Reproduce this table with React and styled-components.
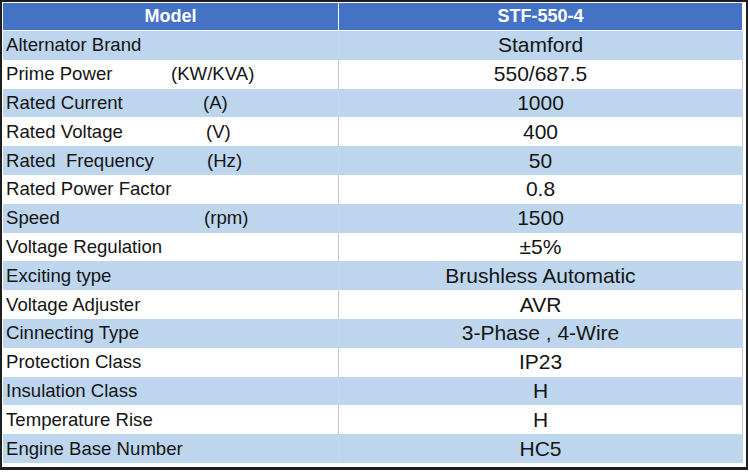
import styled, { createGlobalStyle } from "styled-components";

const Global = createGlobalStyle`
  html, body {
    margin: 0;
    padding: 0;
    background: #ffffff;
  }
`;

const Frame = styled.div`
  box-sizing: border-box;
  width: 748px;
  height: 470px;
  border: 2px solid #1e1e1e;
  border-bottom-width: 3px;
  padding: 1px 3px 4px 1px;
  background: #ffffff;
  font-family: "Liberation Sans", Arial, sans-serif;
  color: #141414;
`;

const Table = styled.div`
  display: flex;
  flex-direction: column;
  width: 740px;
`;

const Row = styled.div`
  display: grid;
  grid-template-columns: 336px 404px;
  box-sizing: border-box;
  height: ${(p) => (p.$head ? "28px" : "28.8px")};
  background: ${(p) => (p.$head ? "#4472c4" : p.$light ? "#bdd6ee" : "#ffffff")};
  border-bottom: ${(p) => (p.$head ? "1px solid #ffffff" : "none")};
`;

const sepColor = (p) => (p.$head ? "#ffffff" : p.$light ? "#c6dbf0" : "#c8c8c8");

const HeadCell = styled.div`
  display: flex;
  align-items: center;
  justify-content: center;
  color: #ffffff;
  font-weight: bold;
  font-size: 18px;
  border-right: 1px solid ${sepColor};
`;

const LabelCell = styled.div`
  display: grid;
  grid-template-columns: ${(p) => (p.$unitAt ? `${p.$unitAt - 6}px auto` : "auto")};
  align-items: center;
  padding-left: 3px;
  font-size: 18.6px;
  white-space: pre;
  border-right: 1px solid ${sepColor};
`;

const Unit = styled.span`
  font-size: 18.6px;
`;

const ValueCell = styled.div`
  display: flex;
  align-items: center;
  justify-content: center;
  font-size: 21px;
  border-right: 1px solid ${(p) => (p.$light ? "#bdd6ee" : "#c8c8c8")};
`;

const rows = [
  { label: "Alternator Brand", value: "Stamford" },
  { label: "Prime Power", unit: "(KW/KVA)", at: 171, value: "550/687.5" },
  { label: "Rated Current", unit: "(A)", at: 203, value: "1000" },
  { label: "Rated Voltage", unit: "(V)", at: 206, value: "400" },
  { label: "Rated  Frequency", unit: "(Hz)", at: 207, value: "50" },
  { label: "Rated Power Factor", value: "0.8" },
  { label: "Speed", unit: "(rpm)", at: 204, value: "1500" },
  { label: "Voltage Regulation", value: "±5%" },
  { label: "Exciting type", value: "Brushless Automatic" },
  { label: "Voltage Adjuster", value: "AVR" },
  { label: "Cinnecting Type", value: "3-Phase , 4-Wire" },
  { label: "Protection Class", value: "IP23" },
  { label: "Insulation Class", value: "H" },
  { label: "Temperature Rise", value: "H" },
  { label: "Engine Base Number", value: "HC5" },
];

export default function App() {
  return (
    <>
      <Global />
      <Frame>
        <Table>
          <Row $head>
            <HeadCell $head>Model</HeadCell>
            <HeadCell $head>STF-550-4</HeadCell>
          </Row>
          {rows.map((r, i) => {
            const light = i % 2 === 0;
            return (
              <Row key={r.label} $light={light}>
                <LabelCell $light={light} $unitAt={r.at}>
                  <span>{r.label}</span>
                  {r.unit && <Unit>{r.unit}</Unit>}
                </LabelCell>
                <ValueCell $light={light}>{r.value}</ValueCell>
              </Row>
            );
          })}
        </Table>
      </Frame>
    </>
  );
}
